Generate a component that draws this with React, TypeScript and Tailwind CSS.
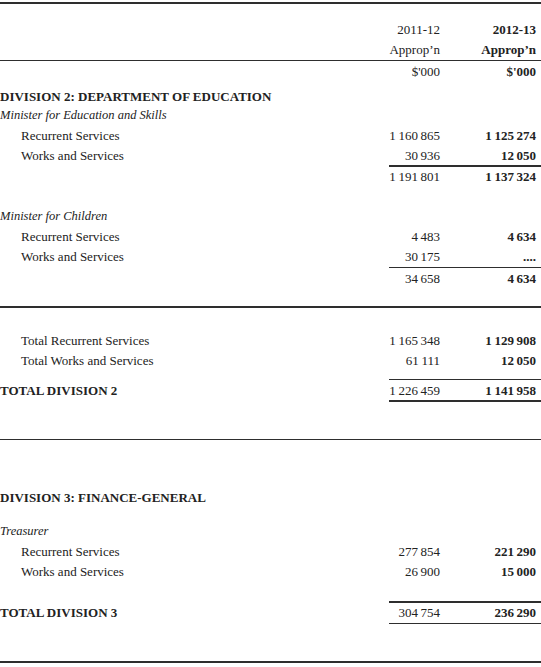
import React from "react";

type RowProps = {
  label?: string;
  a?: string;
  b?: string;
  indent?: boolean;
  italic?: boolean;
  strongLabel?: boolean;
};

// thin spaces between digit groups, as in the printed budget papers
const n = (v: string) => v.replace(/ /g, "\u2009");

function Row({ label, a, b, indent, italic, strongLabel }: RowProps) {
  return (
    <div className="grid grid-cols-[1fr_56px_96px] h-[20px] items-center">
      <div
        className={`whitespace-nowrap ${indent ? "pl-[21px]" : ""} ${italic ? "italic text-[12.5px]" : ""} ${
          strongLabel ? "font-bold" : ""
        }`}
      >
        {label}
      </div>
      <div className="text-right pr-[5px] whitespace-nowrap">{a && n(a)}</div>
      <div className="text-right pr-[5px] font-bold whitespace-nowrap">{b && n(b)}</div>
    </div>
  );
}

function Rule({ short }: { short?: boolean }) {
  return (
    <div className="grid grid-cols-[1fr_56px_96px]">
      <div className={short ? "col-start-2 col-span-2 h-[1.5px] bg-[#2e2e2e]" : "col-span-3 h-[1.5px] bg-[#2e2e2e]"} />
    </div>
  );
}

export default function App() {
  return (
    <div className="w-[541px] h-[667px] bg-white text-[#222] text-[13px] leading-none font-['Liberation_Serif','Times_New_Roman',serif] overflow-hidden">
      <div className="pt-[2px]">
        <Rule />
      </div>

      {/* column heads */}
      <div className="mt-[16px]">
        <Row a="2011-12" b="2012-13" />
        <Row a="Approp’n" b="Approp’n" />
      </div>
      <Rule />
      <Row a="$'000" b="$'000" />

      {/* Division 2 */}
      <div className="mt-[5px]">
        <Row label="DIVISION 2: DEPARTMENT OF EDUCATION" strongLabel />
      </div>
      <div className="-mt-[1px]">
        <Row label="Minister for Education and Skills" italic />
      </div>
      <Row label="Recurrent Services" indent a="1 160 865" b="1 125 274" />
      <Row label="Works and Services" indent a="30 936" b="12 050" />
      <Rule short />
      <Row a="1 191 801" b="1 137 324" />

      <div className="mt-[20px]">
        <Row label="Minister for Children" italic />
      </div>
      <Row label="Recurrent Services" indent a="4 483" b="4 634" />
      <Row label="Works and Services" indent a="30 175" b="...." />
      <Rule short />
      <Row a="34 658" b="4 634" />

      <div className="mt-[18px]">
        <Rule />
      </div>

      <div className="mt-[23px]">
        <Row label="Total Recurrent Services" indent a="1 165 348" b="1 129 908" />
        <Row label="Total Works and Services" indent a="61 111" b="12 050" />
      </div>
      <div className="mt-[8px]">
        <Rule short />
      </div>
      <Row label="TOTAL DIVISION 2" strongLabel a="1 226 459" b="1 141 958" />
      <Rule short />

      <div className="mt-[37px]">
        <Rule />
      </div>

      {/* Division 3 */}
      <div className="mt-[47px]">
        <Row label="DIVISION 3: FINANCE-GENERAL" strongLabel />
      </div>
      <div className="mt-[14px]">
        <Row label="Treasurer" italic />
      </div>
      <Row label="Recurrent Services" indent a="277 854" b="221 290" />
      <Row label="Works and Services" indent a="26 900" b="15 000" />

      <div className="mt-[20px]">
        <Rule short />
      </div>
      <Row label="TOTAL DIVISION 3" strongLabel a="304 754" b="236 290" />
      <Rule short />

      <div className="mt-[37px]">
        <Rule />
      </div>
    </div>
  );
}
